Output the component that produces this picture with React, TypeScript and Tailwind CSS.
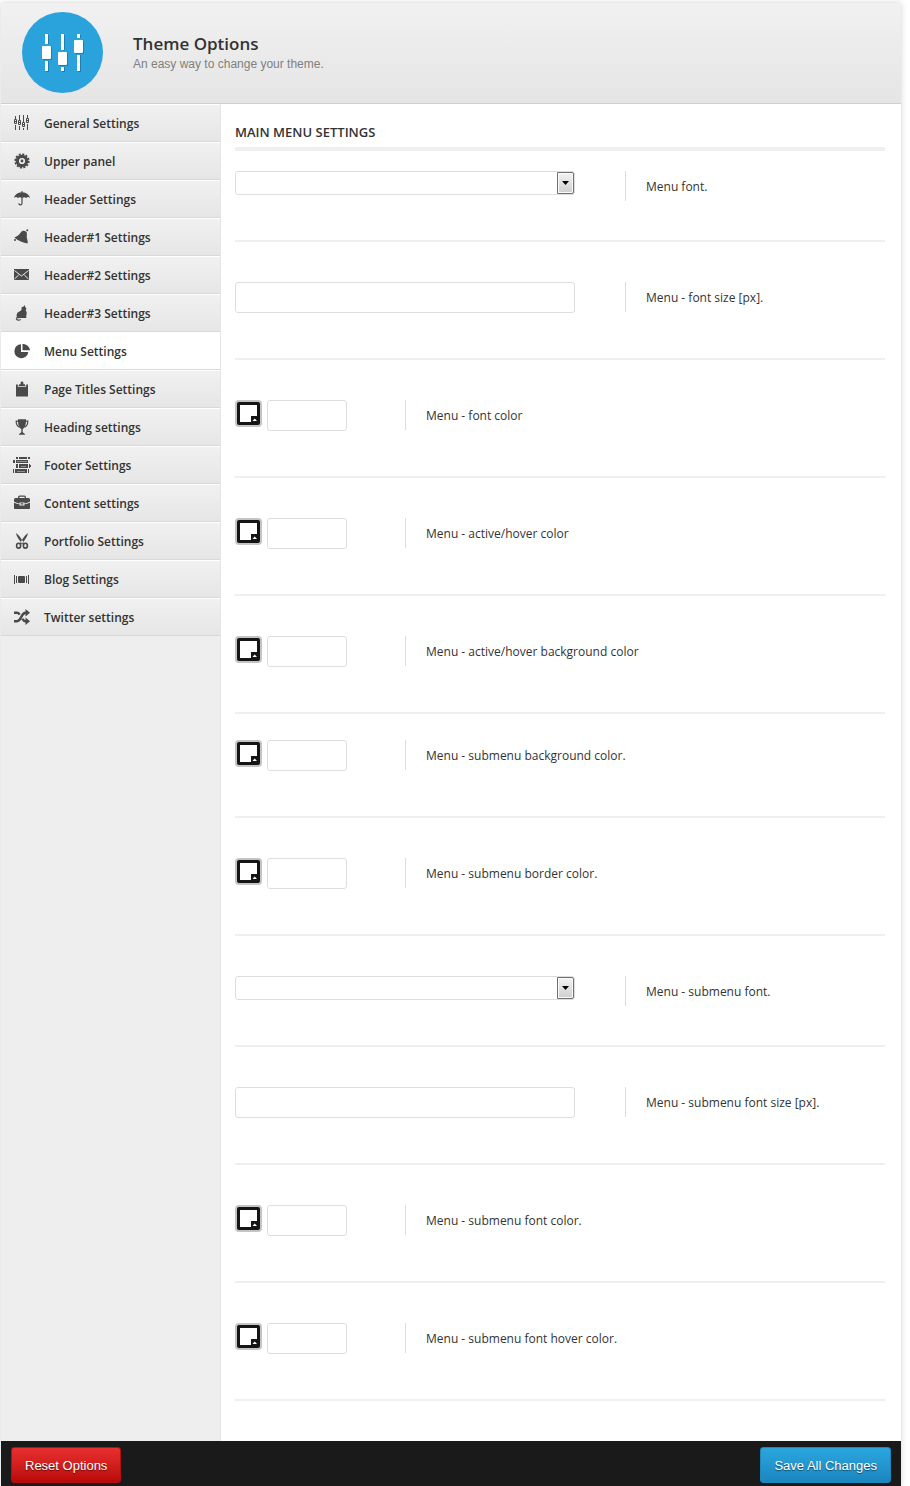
import React, { useState } from 'react';

type IconProps = { children: React.ReactNode };

// 16px sidebar glyph
function Glyph({ children }: IconProps) {
  return (
    <svg viewBox="0 0 16 16" width="16" height="16" fill="currentColor" aria-hidden="true">
      {children}
    </svg>
  );
}

const SlidersIcon = () => (
  <Glyph>
    <path d="M1 1h1v3H1zM1 10h1v5H1zM5 0h1v5H5zM5 11h1v4H5zM9 0h1v7H9zM9 13h1v2H9zM13 0h1v3h-1zM13 9h1v6h-1z" />
    <g fill="none" stroke="currentColor">
      <path d="M.5 4.500h2v4h-2zM.5 6.500h2M4.500 5.500h2v4h-2zM4.500 7.500h2M8.500 7.500h2v4h-2zM8.500 9.500h2M12.500 3.500h2v4h-2zM12.500 5.500h2" />
    </g>
  </Glyph>
);

const GearIcon = () => (
  <Glyph>
    <circle cx="8" cy="8" r="6.800" fill="none" stroke="currentColor" strokeWidth="1.600" strokeDasharray="2.060 1.500" />
    <circle cx="8" cy="8" r="4.700" fill="none" stroke="currentColor" strokeWidth="3.200" />
    <circle cx="8" cy="8" r="1.400" />
  </Glyph>
);

const UmbrellaIcon = () => (
  <Glyph>
    <path d="M7.500 0h1v1.200C12 1.500 15.300 3.500 16 7c-1.200-1.200-2.800-1.200-3.800 0C11 6 9.700 6 8.600 6.700V12.300a2.200 2.200 0 0 1-4.400 0h1.200a1 1 0 0 0 2 0V6.700C6.300 6 5 6 3.800 7 2.800 5.800 1.200 5.800 0 7 .7 3.500 4 1.500 7.500 1.200z" />
  </Glyph>
);

const BellIcon = () => (
  <Glyph>
    <path d="M.3 8.500C3.500 7.300 5 6 6.500 3.700 8 1.700 10 1.300 11.800 2.500l.7.300C13.500 5.500 12.300 7 13 9.500c.4 1.600 1 3 .6 5C9.500 14 4 11.800.3 8.500z" />
    <circle cx="13.300" cy="1.300" r="1" />
    <circle cx="1" cy="11" r="1" />
  </Glyph>
);

const MailIcon = () => (
  <Glyph>
    <path d="M0 2h15v11H0z" />
    <path d="M.5 3.500L7.500 9l7-5.500M.5 12l4.200-4M14.500 12l-4.200-4" fill="none" stroke="#ececec" />
  </Glyph>
);

const CatIcon = () => (
  <Glyph>
    <path d="M7.800 1.800L9.200 2 10.500 0l.8 2L12.500 3.800l-.9 1.500c1 1.200 1.500 2.700.9 4.200-.5 1.300-.2 2.300-.1 3.600H4.500C2 12.800 2 8.300 4.500 7 6.500 6 8 5.300 7.500 4z" />
    <path d="M5.500 12.700c-2.500-.5-3.500.4-3 1.400.5 1.100 2.500 1.300 4.200.4" fill="none" stroke="currentColor" strokeWidth="1.200" />
  </Glyph>
);

const PieIcon = () => (
  <Glyph>
    <path d="M7 1.200V9h7.300A7 7 0 1 1 7 1.200z" />
    <path d="M8.500 1v6.300H16C15.500 3.500 12.500 1 8.500 1z" />
  </Glyph>
);

const ClipboardIcon = () => (
  <Glyph>
    <path d="M2 3.500h1.800V5.800h8.400V3.500H14v12H2z" />
    <path d="M4.500 5L5.200 3.300H6.600V2a1.400 1.400 0 0 1 2.800 0v1.300h1.400l.7 1.700z" />
  </Glyph>
);

const TrophyIcon = () => (
  <Glyph>
    <path d="M4 .3h8c.2 5-1 8.700-3.300 9.700v2.700c.2 1 1.300 1.300 2.300 2.300v.7H5V15c1-1 2.100-1.300 2.300-2.300V10C5 9 3.800 5.300 4 .3z" />
    <path d="M4 2.200H2.200c0 2.700.8 4.900 3.300 6M12 2.200h1.800c0 2.700-.8 4.900-3.300 6" fill="none" stroke="currentColor" strokeWidth="1.200" />
  </Glyph>
);

const BriefcaseIcon = () => (
  <Glyph>
    <path d="M4.700 4V2.200c0-.6.4-1 1-1h4.600c.6 0 1 .4 1 1V4" fill="none" stroke="currentColor" strokeWidth="1.300" />
    <path d="M1.500 3h13c1 0 1.500.8 1.500 1.800v1.700c-2 1.200-3.700 1.700-5.500 1.900v-1h-5v1C3.700 8.200 2 7.700 0 6.500V4.800C0 3.800.5 3 1.500 3z" />
    <path d="M0 7.500c2 1.100 3.700 1.500 5.500 1.700v1.300h5V9.200c1.800-.2 3.500-.6 5.500-1.700V13c0 .6-.4 1-1 1H1c-.6 0-1-.4-1-1zM6.700 8.300h2.600v1.300H6.700z" />
  </Glyph>
);

const BooksIcon = () => (
  <svg viewBox="0 0 18 16" width="18" height="16" fill="currentColor" aria-hidden="true">
    <path d="M3 0h2v2H3zM6 0h8v2H6zM15 0h2v2h-2zM0 3h2v3H0zM3 3h12v3H3zM3 7h2v4H3zM6 7h9v4H6zM16 7h1v4h-1zM17 8h1v2h-1zM0 12h1v4H0zM2 12h12v4H2zM15 12h1v4h-1z" />
    <path d="M4 4h10v1H4zM8 9h5v1H8zM4 14h8v1H4z" fill="#8f8f8f" />
  </svg>
);

const ScissorsIcon = () => (
  <Glyph>
    <path d="M2 0c.2 2.500 2.200 6 5 9.200l1.800 2.300 1.200-1C8.500 7 5 2 2 0zM14 0c-.2 2.500-2.200 6-5 9.200l-1.800 2.300-1.200-1C7.500 7 11 2 14 0z" />
    <g fill="none" stroke="currentColor" strokeWidth="1.600">
      <ellipse cx="4.600" cy="12.700" rx="2" ry="2.400" />
      <ellipse cx="11.400" cy="12.700" rx="2" ry="2.400" />
    </g>
  </Glyph>
);

const SlideshowIcon = () => (
  <Glyph>
    <path d="M0 4h1v9H0zM2 5h1v7H2zM12 5h1v7h-1zM14 4h1v9h-1z" />
    <rect x="4" y="5" width="7" height="7" rx="1" />
  </Glyph>
);

const ShuffleIcon = () => (
  <Glyph>
    <path d="M0 3.800h3c1.200 0 2 .8 2.700 1.800M0 12.200h3c4.500 0 4-8.400 8.500-8.400h1M8.300 9.800c.8 1.500 1.800 2.400 3.200 2.400h1" fill="none" stroke="currentColor" strokeWidth="2.400" />
    <path d="M11.500 0L16 3.800l-4.500 3.700zM11.500 8.500L16 12.200 11.500 16z" />
  </Glyph>
);

const MENU = [
  { label: 'General Settings', icon: <SlidersIcon /> },
  { label: 'Upper panel', icon: <GearIcon /> },
  { label: 'Header Settings', icon: <UmbrellaIcon /> },
  { label: 'Header#1 Settings', icon: <BellIcon /> },
  { label: 'Header#2 Settings', icon: <MailIcon /> },
  { label: 'Header#3 Settings', icon: <CatIcon /> },
  { label: 'Menu Settings', icon: <PieIcon /> },
  { label: 'Page Titles Settings', icon: <ClipboardIcon /> },
  { label: 'Heading settings', icon: <TrophyIcon /> },
  { label: 'Footer Settings', icon: <BooksIcon /> },
  { label: 'Content settings', icon: <BriefcaseIcon /> },
  { label: 'Portfolio Settings', icon: <ScissorsIcon /> },
  { label: 'Blog Settings', icon: <SlideshowIcon /> },
  { label: 'Twitter settings', icon: <ShuffleIcon /> },
];

type Field = { id: string; kind: 'select' | 'text' | 'color'; label: string; tight?: boolean };

const FIELDS: Field[] = [
  { id: 'menu-font', kind: 'select', label: 'Menu font.' },
  { id: 'menu-font-size', kind: 'text', label: 'Menu - font size [px].' },
  { id: 'menu-font-color', kind: 'color', label: 'Menu - font color' },
  { id: 'menu-active-color', kind: 'color', label: 'Menu - active/hover color' },
  { id: 'menu-active-bg', kind: 'color', label: 'Menu - active/hover background color' },
  { id: 'submenu-bg', kind: 'color', label: 'Menu - submenu background color.', tight: true },
  { id: 'submenu-border', kind: 'color', label: 'Menu - submenu border color.' },
  { id: 'submenu-font', kind: 'select', label: 'Menu - submenu font.' },
  { id: 'submenu-font-size', kind: 'text', label: 'Menu - submenu font size [px].' },
  { id: 'submenu-font-color', kind: 'color', label: 'Menu - submenu font color.' },
  { id: 'submenu-hover-color', kind: 'color', label: 'Menu - submenu font hover color.' },
];

const inputClass = 'block h-[31px] rounded-[3px] border border-[#dedede] bg-white px-2 text-xs text-[#333] outline-none';

function Logo() {
  return (
    <svg viewBox="0 0 82 82" className="size-[82px] shrink-0" aria-hidden="true">
      <circle cx="41.500" cy="40.500" r="40.500" fill="#2aa2dc" />
      <g fill="#1c7fb2" transform="translate(1 1)">
        <path d="M24 22h3v37h-3zM40 22h3v37h-3zM56 22h3v37h-3z" />
      </g>
      <g fill="#2aa2dc">
        <path d="M20 32h11v17H20zM36 38h11v17H36zM52 26h11v17H52z" />
      </g>
      <g fill="#1c7fb2">
        <path d="M22 35h9v13h-9zM38 41h9v13h-9zM54 29h9v13h-9z" />
      </g>
      <g fill="#fff">
        <path d="M24 22h3v10h-3zM24 49h3v10h-3zM40 22h3v16h-3zM40 55h3v4h-3zM56 22h3v4h-3zM56 43h3v16h-3z" />
        <rect x="21" y="34" width="9" height="13" rx="1" />
        <rect x="37" y="40" width="9" height="13" rx="1" />
        <rect x="53" y="28" width="9" height="13" rx="1" />
      </g>
    </svg>
  );
}

function ColorButton({ label }: { label: string }) {
  return (
    <button type="button" aria-label={label} className="block size-[27px] shrink-0 cursor-pointer">
      <svg viewBox="0 0 27 27" width="27" height="27">
        <rect width="27" height="27" rx="4" fill="#c4c4c4" />
        <rect x="2" y="2" width="23" height="23" rx="2" fill="#151515" />
        <path d="M5 5h17v11h-6v6H5z" fill="#fff" />
        <path d="M17.500 21L19.700 18.500 22 21z" fill="#fff" />
      </svg>
    </button>
  );
}

function Control({ field }: { field: Field }) {
  if (field.kind === 'select') {
    return (
      <div className="relative w-[340px]">
        <select
          id={field.id}
          className="block h-6 w-full appearance-none rounded-[3px] border border-[#dedede] bg-white pl-2 pr-6 text-xs text-[#333] outline-none"
        />
        <span className="pointer-events-none absolute inset-y-px right-px flex w-[17px] items-center justify-center rounded-r-[2px] border border-[#707070] bg-linear-to-b from-[#f2f2f2] to-[#cfcfcf] shadow-[inset_0_0_0_1px_#fafafa]">
          <svg viewBox="0 0 7 4" width="7" height="4">
            <path d="M0 0h7L3.500 4z" />
          </svg>
        </span>
      </div>
    );
  }

  if (field.kind === 'color') {
    return (
      <div className="flex gap-[5px]">
        <ColorButton label={field.label} />
        <input id={field.id} type="text" className={`${inputClass} w-20`} />
      </div>
    );
  }

  return <input id={field.id} type="text" className={`${inputClass} w-[340px]`} />;
}

function FieldRow({ field, first }: { field: Field; first: boolean }) {
  const top = first ? 'pt-5' : field.tight ? 'pt-[26px]' : 'pt-10';
  const bottom = field.kind === 'select' ? 'pb-[39px]' : 'pb-[46px]';
  return (
    <div className={`flex items-start border-b-2 border-[#efefef] ${top} ${bottom}`}>
      <div className={`h-[30px] shrink-0 ${field.kind === 'color' ? 'w-[170px]' : 'w-[390px]'}`}>
        <Control field={field} />
      </div>
      <label
        htmlFor={field.id}
        className="flex h-[30px] items-center border-l border-[#dcdcdc] pt-0.5 pl-5 text-xs text-[#333]"
      >
        {field.label}
      </label>
    </div>
  );
}

export default function App() {
  const [active, setActive] = useState('Menu Settings');

  return (
    <div className="bg-white pt-[3px] pr-[9px] pl-px font-['Open_Sans','Liberation_Sans',sans-serif] text-[#333]">
      <div className="shadow-[0_0_6px_rgba(0,0,0,0.18)]">
        <header className="flex h-[101px] items-start border-b border-[#cfcfcf] bg-linear-to-b from-[#f1f1f1] to-[#e5e5e5] pt-[9px] pl-5">
          <Logo />
          <div className="pt-[22px] pl-[30px]">
            <h1 className="text-[17px] leading-5 font-semibold">Theme Options</h1>
            <p className="font-['Liberation_Sans',sans-serif] text-xs leading-5 text-[#808080]">
              An easy way to change your theme.
            </p>
          </div>
        </header>

        <div className="flex">
          <nav className="w-[220px] shrink-0 border-r border-[#e6e6e6] bg-[#eee]">
            {MENU.map(({ label, icon }) => (
              <a
                key={label}
                href="#"
                onClick={(e) => {
                  e.preventDefault();
                  setActive(label);
                }}
                className={`flex h-[38px] items-center gap-3 border-b border-[#d9d9d9] pt-0.5 pl-3 text-xs font-semibold ${
                  active === label
                    ? 'bg-white'
                    : 'bg-linear-to-b from-[#f1f1f1] to-[#e6e6e6] shadow-[inset_0_1px_0_#fff]'
                }`}
              >
                <span className="flex w-[19px] shrink-0 justify-center pr-px pb-0.5 text-[#4a4a4a]">{icon}</span>
                {label}
              </a>
            ))}
          </nav>

          <main className="min-w-0 flex-1 bg-white pt-[18px] pr-4 pb-10 pl-[14px]">
            <h2 className="border-b-4 border-[#f0f0f0] pb-[5px] text-[13px] leading-5 font-semibold">
              MAIN MENU SETTINGS
            </h2>
            {FIELDS.map((field, i) => (
              <FieldRow key={field.id} field={field} first={i === 0} />
            ))}
          </main>
        </div>

        <footer className="flex h-[45px] items-center justify-between bg-[#1a1a1a] px-[10px] pt-[3px] font-['Liberation_Sans',sans-serif] text-[13px] text-white">
          <button
            type="button"
            className="h-9 cursor-pointer rounded-[3px] border border-[#b01212] bg-linear-to-b from-[#e92f2f] to-[#b90808] px-[13px] pt-0.5 [text-shadow:0_1px_1px_rgba(0,0,0,0.5)]"
          >
            Reset Options
          </button>
          <button
            type="button"
            className="h-9 cursor-pointer rounded-[3px] border border-[#1f87bb] bg-linear-to-b from-[#2ba6df] to-[#1b86bf] px-[13px] pt-0.5 [text-shadow:0_1px_1px_rgba(0,0,0,0.5)]"
          >
            Save All Changes
          </button>
        </footer>
      </div>
    </div>
  );
}
